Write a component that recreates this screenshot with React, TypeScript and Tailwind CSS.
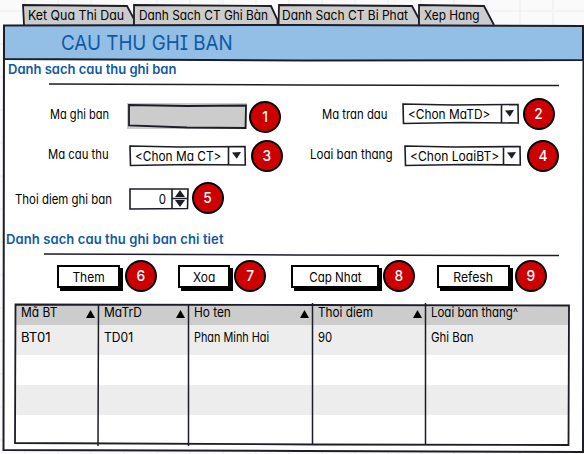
import type { ReactNode } from "react";

const INK = "#1c1d26";

function Sketch({ d, w = 2 }: { d: string; w?: number }) {
  return (
    <svg className="pointer-events-none absolute inset-0 h-full w-full overflow-visible" fill="none" stroke={INK} strokeWidth={w}>
      <path d={d} />
    </svg>
  );
}

function Badge({ n, className = "" }: { n: number; className?: string }) {
  return (
    <div className={`flex size-8 shrink-0 items-center justify-center rounded-full border-2 border-black bg-[#cc0000] text-[15px] font-medium text-white ${className}`}>
      <span className="scale-x-[0.92]">{n}</span>
    </div>
  );
}

function Label({ children, className = "", text }: { children: ReactNode; className?: string; text: string }) {
  return (
    <div className={`shrink-0 leading-5 ${className}`}>
      <span className={`inline-block origin-left whitespace-nowrap ${text}`}>{children}</span>
    </div>
  );
}

function Select({ value, className = "", text }: { value: string; className?: string; text: string }) {
  return (
    <div className={`relative flex h-[21px] w-[117px] shrink-0 items-center bg-white ${className}`}>
      <div className="w-[103px] pl-[6px] leading-5">
        <span className={`inline-block origin-left whitespace-nowrap ${text}`}>{value}</span>
      </div>
      <svg className="h-[7px] w-[9px]" viewBox="0 0 9 7">
        <path d="M0 0.5L9 0L4.8 6.8Z" fill={INK} />
      </svg>
      <Sketch w={1.6} d="M1 1L50 2L116 1.5L116.3 20L60 19.5L1.5 20.5ZM99.5 1.5V20" />
    </div>
  );
}

function Button({ children, className, text }: { children: ReactNode; className: string; text: string }) {
  return (
    <button className={`flex h-[23px] shrink-0 items-center justify-center whitespace-nowrap border-2 border-black bg-white leading-5 shadow-[3px_3px_0_0_#000] ${className}`}>
      <span className={`inline-block ${text}`}>{children}</span>
    </button>
  );
}

function Tab({ children, className, shape, text }: { children: ReactNode; className: string; shape: string; text: string }) {
  return (
    <div className={`relative h-[21px] shrink-0 ${className}`}>
      <svg className="absolute inset-0 h-full w-full overflow-visible" stroke={INK} strokeWidth="1.8" fill="#cccccc">
        <path d={shape} />
      </svg>
      <span className={`relative block w-max origin-left whitespace-nowrap leading-5 ${text}`}>{children}</span>
    </div>
  );
}

const columns = [
  { title: "Mã BT", value: "BT01", w: "w-[83px]", sort: true, t: "scale-x-[0.92]", v: "scale-x-[1.01]" },
  { title: "MaTrD", value: "TD01", w: "w-[90px]", sort: true, t: "scale-x-[0.92]", v: "scale-x-[0.93]" },
  { title: "Ho ten", value: "Phan Minh Hai", w: "w-[124px]", sort: true, t: "scale-x-[0.91]", v: "scale-x-[0.835]" },
  { title: "Thoi diem", value: "90", w: "w-[113px]", sort: true, t: "scale-x-[0.905]", v: "scale-x-[0.87]" },
  { title: "Loai ban thang^", value: "Ghi Ban", w: "w-[144px]", sort: false, t: "scale-x-[0.883]", v: "scale-x-[0.88]" },
];

export default function App() {
  return (
    <div className="h-[454px] w-[584px] overflow-hidden bg-[#fafafa] bg-[linear-gradient(to_right,#f3f3f3_2px,transparent_2px),linear-gradient(to_bottom,#f3f3f3_2px,transparent_2px)] bg-[size:33px_33px] bg-position-[24px_10px] pl-1 pt-[5px] font-['Inter',sans-serif] text-[13px] text-black [font-feature-settings:'cv11']">
      <nav className="flex h-5 pl-[19px]">
        <Tab className="w-[111px] pl-[5px]" shape="M1 20L0 0L104 1L111 14V20" text="scale-x-[0.953]">Ket Qua Thi Dau</Tab>
        <Tab className="w-[144px] pl-[5px]" shape="M0 20L0 0L137 1L143.5 15V20" text="scale-x-[0.913]">Danh Sach CT Ghi Bàn</Tab>
        <Tab className="w-[141px] pl-1" shape="M0.5 20L1 0L134 1L141 14V20" text="scale-x-[0.923]">Danh Sach CT Bi Phat</Tab>
        <Tab className="w-[76px] pl-[5px]" shape="M0 20L0 0L65 1L75 20" text="scale-x-[0.91]">Xep Hang</Tab>
      </nav>

      <main className="relative h-[426px] w-[580px] bg-white">
        <header className="relative h-[35px] bg-[#93bee6] pl-[57px] pt-[3px]">
          <h1 className="w-max origin-left scale-x-[0.94] text-[20px] leading-[30px] text-[#0f5aa2] [font-feature-settings:'cv11','cv08']">CAU THU GHI BAN</h1>
          <Sketch d="M0 0.5L300 0L579 1L579 35L300 35.5L0 34Z" />
        </header>

        <h2 className="h-[19px] pl-1 text-[13px] font-semibold leading-[18px] text-[#0f5aa2]">Danh sach cau thu ghi ban</h2>
        <div className="relative ml-[45px] h-[14px] w-[510px]">
          <Sketch w={1.5} d="M0 5L250 6L510 6.5" />
        </div>

        <section className="flex h-[42px]">
          <Label className="ml-[46px] mt-[11px] w-[77px]" text="scale-x-[0.85]">Ma ghi ban</Label>
          <div className="relative mt-[10px] h-[26px] w-[120px] bg-[#cccccc]">
            <Sketch w={1.8} d="M2 2L60 3L119 2.5L118.5 25L60 24.5L2 22.5Z" />
          </div>
          <Badge n={1} className="ml-[2px] mt-2" />
          <Label className="ml-[41px] mt-[11px] w-[80px]" text="scale-x-[0.87]">Ma tran dau</Label>
          <Select value="<Chon MaTD>" className="mt-[10px]" text="scale-x-[0.912]" />
          <Badge n={2} className="ml-[4px] mt-[5px]" />
        </section>
        <section className="flex h-[42px]">
          <Label className="ml-[44px] mt-[9px] w-[81px]" text="scale-x-[0.87]">Ma cau thu</Label>
          <Select value="<Chon Ma CT>" className="mt-[10px]" text="scale-x-[0.912]" />
          <Badge n={3} className="ml-[5px] mt-[5px]" />
          <Label className="ml-[27px] mt-[9px] w-[94px]" text="scale-x-[0.89]">Loai ban thang</Label>
          <Select value="<Chon LoaiBT>" className="mt-[10px]" text="scale-x-[0.93]" />
          <Badge n={4} className="ml-[6px] mt-[5px]" />
        </section>
        <section className="flex h-[52px]">
          <Label className="ml-[11px] mt-[12px] w-[114px]" text="scale-x-[0.878]">Thoi diem ghi ban</Label>
          <div className="relative mt-[11px] flex h-[21px] w-[59px] items-center">
            <span className="w-[37px] origin-right scale-x-[0.88] text-right leading-5">0</span>
            <Sketch w={1.6} d="M1 1L59 1L58.5 20.5L1 21ZM43 1V20M43 10.5H59" />
            <svg className="ml-[9px] h-[17px] w-[10px]" viewBox="0 0 10 17">
              <path d="M0 7L5 0L10 7ZM0 10H10L5 17Z" fill={INK} />
            </svg>
          </div>
          <Badge n={5} className="ml-1 mt-[5px]" />
        </section>

        <h2 className="h-5 pl-[2px] text-[13px] font-semibold leading-5 tracking-[0.1px] text-[#0f5aa2]">Danh sach cau thu ghi ban chi tiet</h2>
        <div className="relative ml-10 h-[11px] w-[515px]">
          <Sketch w={1.5} d="M0 5L250 6L515 6.5" />
        </div>

        <section className="flex h-[45px] pl-[53px]">
          <Button className="mt-[5px] w-[63px]" text="scale-x-[0.92]">Them</Button>
          <Badge n={6} className="ml-[5px]" />
          <Button className="ml-[21px] mt-[5px] w-[52px]" text="scale-x-[0.92]">Xoa</Button>
          <Badge n={7} className="ml-1" />
          <Button className="ml-[25px] mt-[5px] w-[88px]" text="scale-x-[0.89]">Cap Nhat</Button>
          <Badge n={8} className="ml-1" />
          <Button className="ml-[22px] mt-[5px] w-[73px]" text="scale-x-[0.94]">Refesh</Button>
          <Badge n={9} className="ml-[5px]" />
        </section>

        <div className="relative ml-[11px] flex h-[140px] w-[554px]">
          {columns.map((c) => (
            <div key={c.title} className={`shrink-0 ${c.w}`}>
              <div className="flex h-5 items-center justify-between bg-[#cccccc] pl-[6px] pr-[3px]">
                <span className={`-mt-[5px] origin-left whitespace-nowrap ${c.t}`}>{c.title}</span>
                {c.sort && (
                  <svg className="-mt-[3px] h-2 w-[9px] shrink-0" viewBox="0 0 9 8">
                    <path d="M0 8L4.5 0L9 8Z" fill="#000" />
                  </svg>
                )}
              </div>
              <div className="h-[30px] bg-[#ededed] pl-[6px] leading-6">
                <span className={`inline-block origin-left whitespace-nowrap ${c.v}`}>{c.value}</span>
              </div>
              <div className="h-[30px]" />
              <div className="h-[30px] bg-[#ededed]" />
              <div className="h-[30px]" />
            </div>
          ))}
          <Sketch w={1.8} d="M0.5 -0.5L300 0L554 0.5L553.5 140L300 139.5L0 138Z" />
          <Sketch w={1.5} d="M83.5 0L83 141M173.5 0V141M297.5 -2V139M410.5 -2V139" />
        </div>
        <Sketch d="M0 0L-0.5 425L300 426L579 427L579.5 0" />
      </main>
    </div>
  );
}
